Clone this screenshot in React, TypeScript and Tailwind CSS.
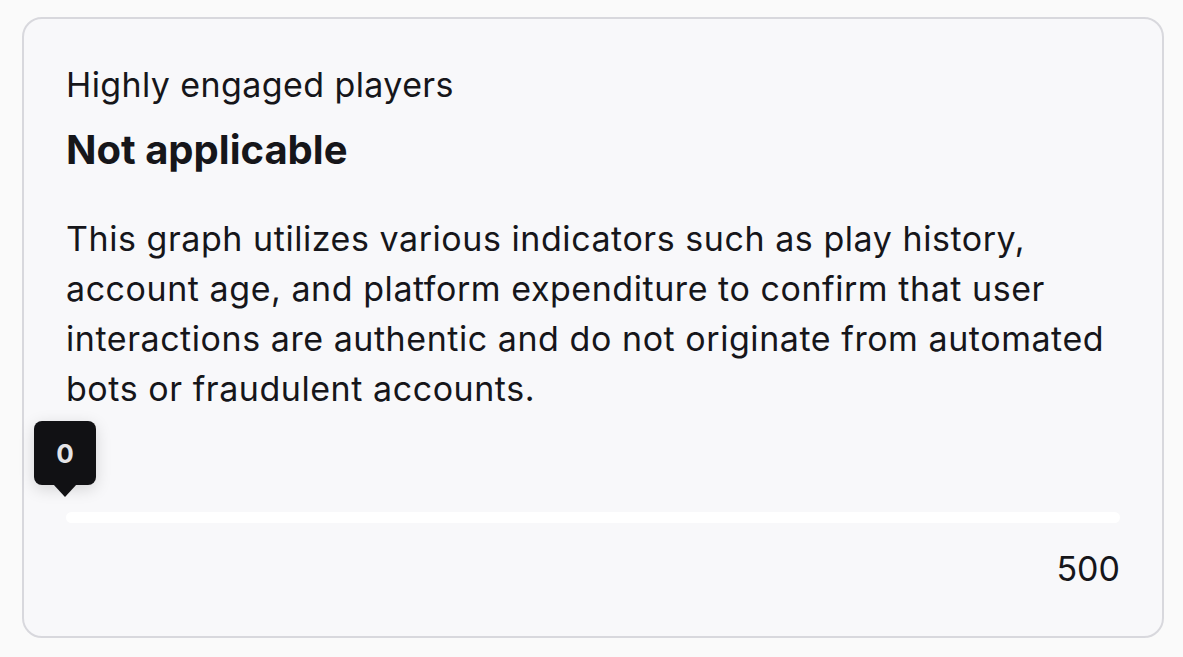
export default function App() {
  return (
    <div className="min-h-[657px] w-[1183px] bg-[#fafafa] pl-[22px] pr-[19px] pt-[17px] pb-[19px]" style={{ fontFamily: "Inter, 'Noto Sans', sans-serif" }}>
      <div className="h-[621px] rounded-[20px] border-2 border-[#d8d8dd] bg-[#f8f8fa] px-[42px] pt-[46px] text-[#16161a]">
        <div className="text-[34px] leading-[40px] tracking-[0.4px]">Highly engaged players</div>
        <div className="mt-[21px] text-[40px] leading-[48px] font-bold">Not applicable</div>
        <p className="mt-[40px] whitespace-nowrap text-[34px] leading-[50px] tracking-[0.55px]">
          This graph utilizes various indicators such as play history,<br />
          account age, and platform expenditure to confirm that user<br />
          interactions are authentic and do not originate from automated<br />
          bots or fraudulent accounts.
        </p>
        <div className="relative mt-[98px] h-[11px] rounded-full bg-white">
          <div className="absolute bottom-[38px] left-[-32px] flex h-[64px] w-[62px] items-center justify-center rounded-[8px] bg-[#111114] text-[26px] font-bold text-[#e4e4e7] shadow-[0_4px_16px_rgba(0,0,0,0.15)]">
            0
            <div className="absolute bottom-[-12px] left-1/2 h-0 w-0 -translate-x-1/2 border-x-[12px] border-t-[13px] border-x-transparent border-t-[#111114]" />
          </div>
        </div>
        <div className="mt-[26px] text-right text-[34px] leading-[40px]">500</div>
      </div>
    </div>
  );
}
